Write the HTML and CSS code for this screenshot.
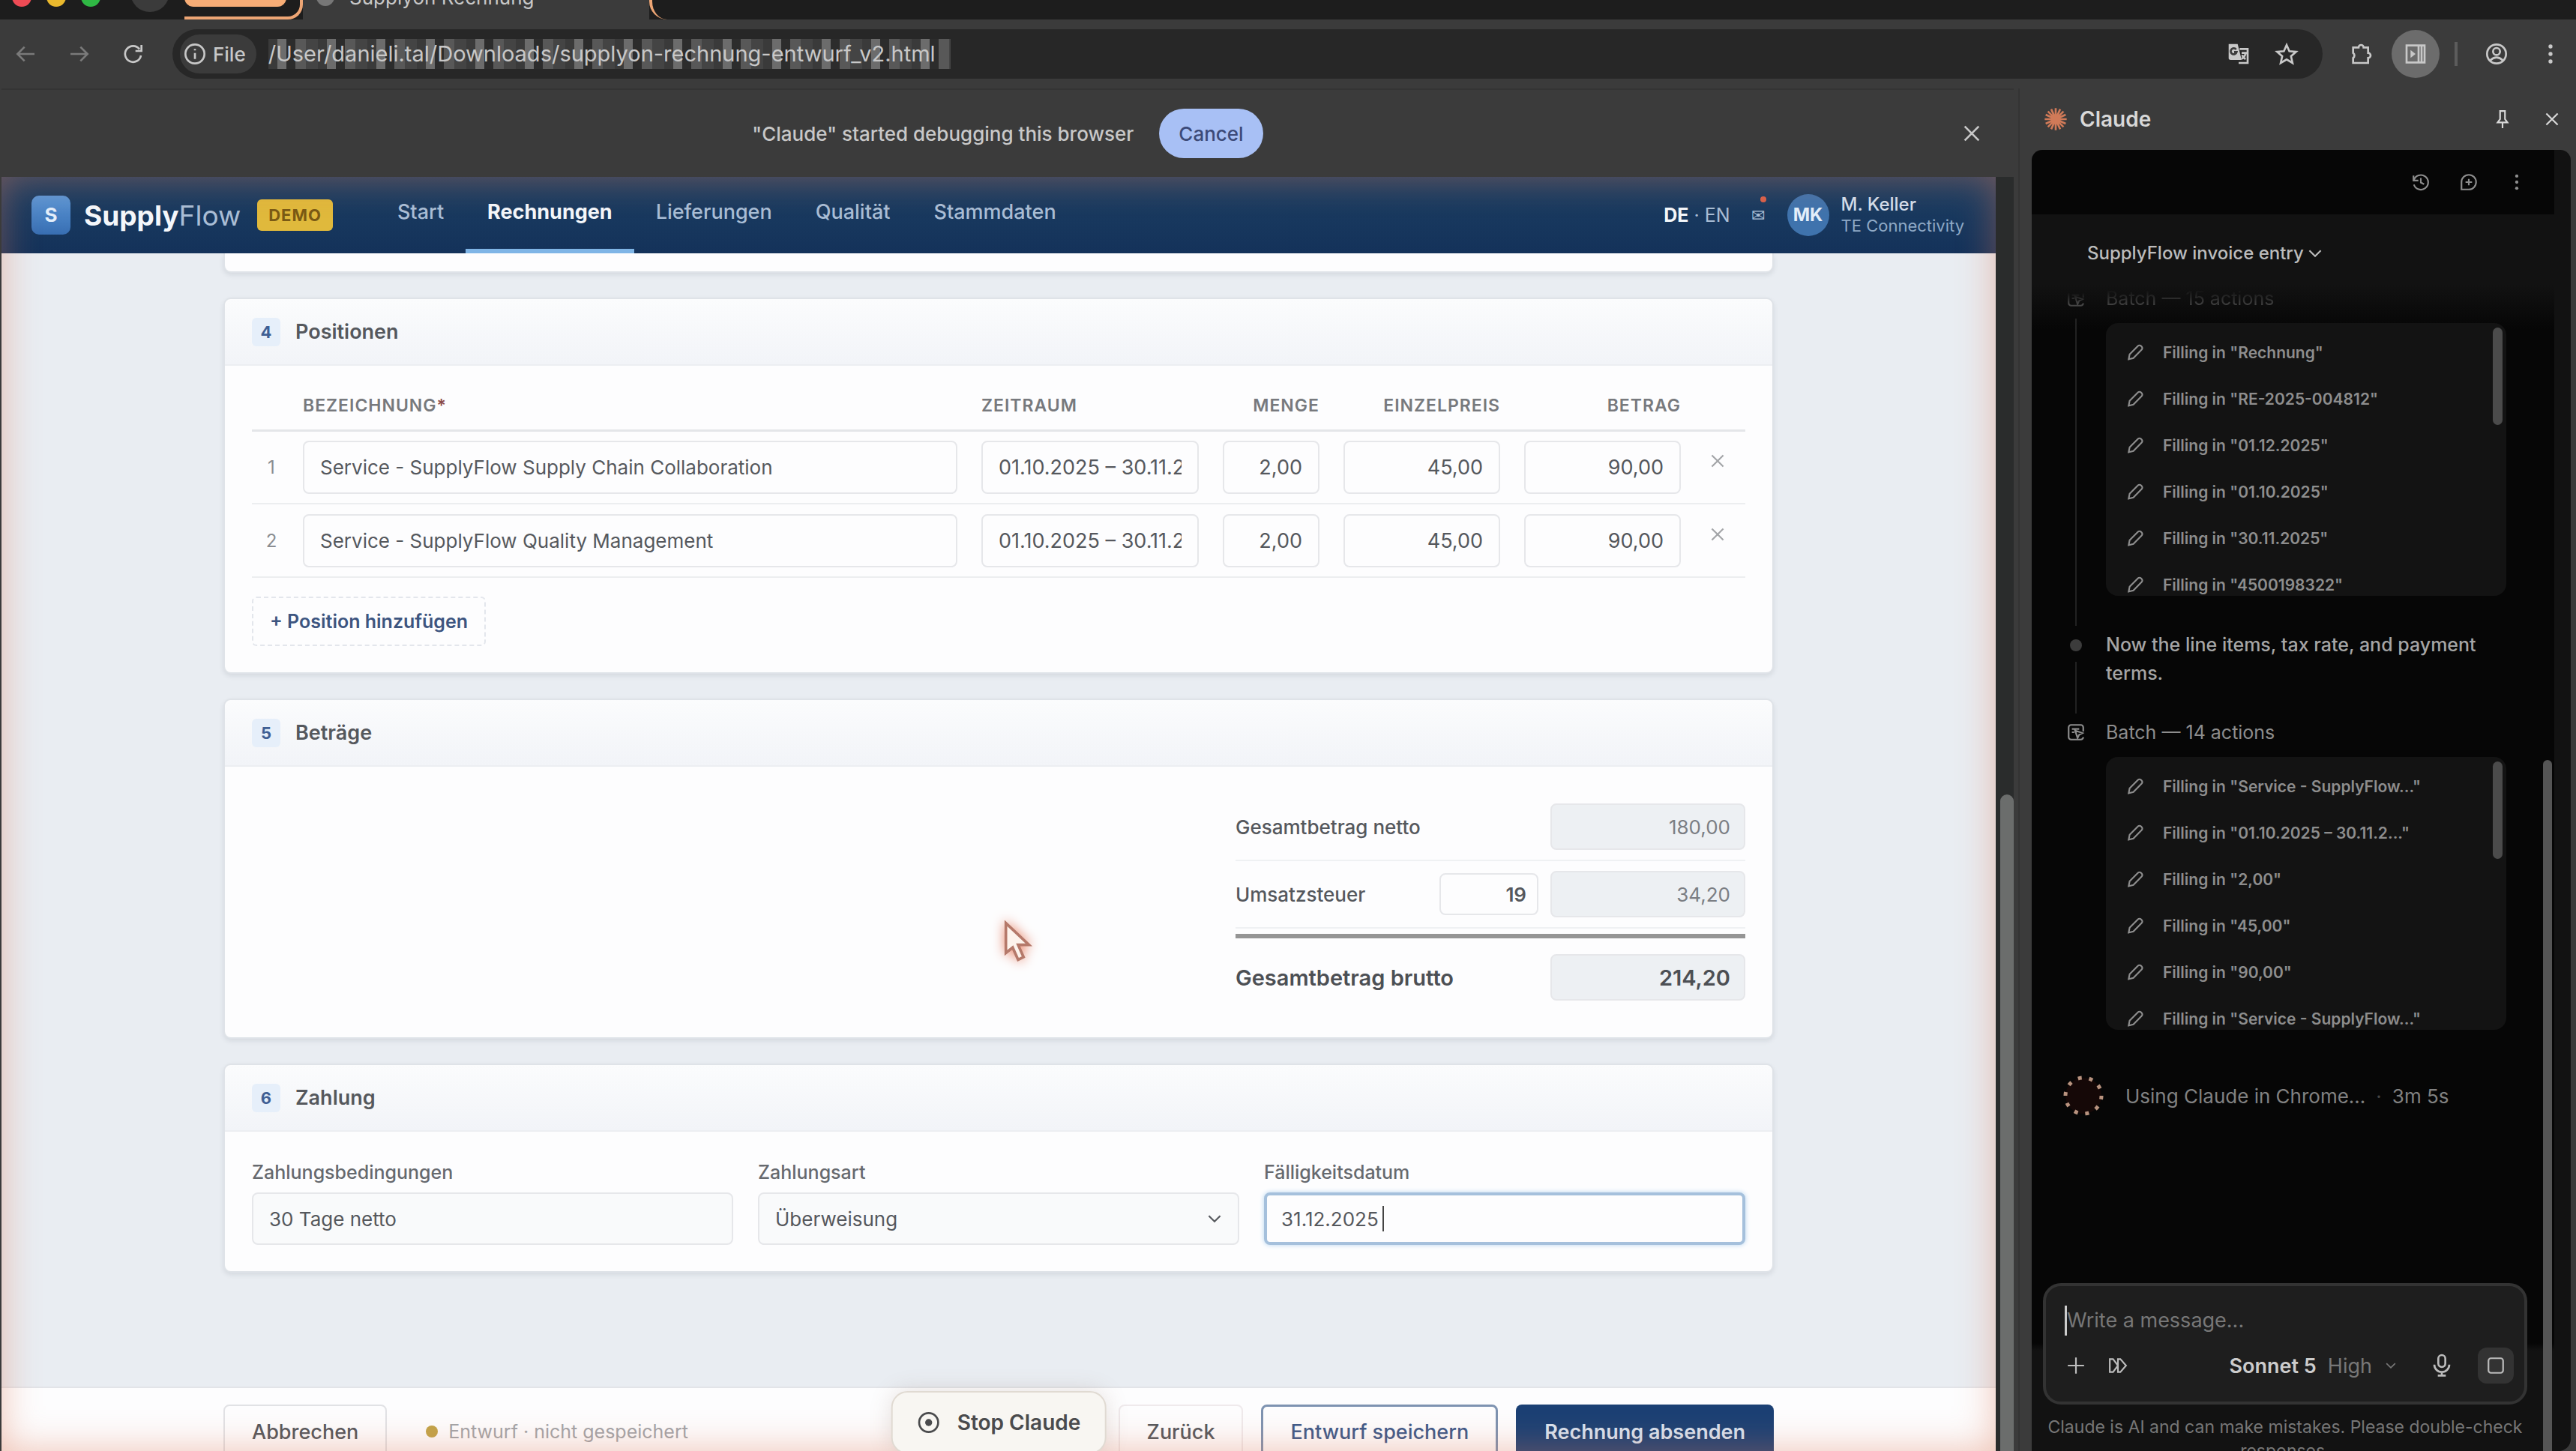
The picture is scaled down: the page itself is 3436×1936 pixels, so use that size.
FILE: index.html
```html
<!DOCTYPE html>
<html lang="de">
<head>
    <meta charset="UTF-8">
    <meta name="viewport" content="width=device-width, initial-scale=1.0">
    <title>SupplyFlow - Rechnungen</title>
    <link rel="stylesheet" href="styles.css">
</head>
<body>
    <svg class="sprite" aria-hidden="true">
        <symbol id="i-close" viewBox="0 0 24 24"><path d="M5 5l14 14M19 5L5 19"/></symbol>
        <symbol id="i-chevron" viewBox="0 0 24 24"><path d="M5 8.500l7 7 7-7"/></symbol>
        <symbol id="i-pencil" viewBox="0 0 24 24"><path d="M4 20.500l1.200-6L15.500 4.200a2.500 2.500 0 0 1 3.600 0l.9.9a2.500 2.500 0 0 1 0 3.600L9.800 19.200z"/></symbol>
        <symbol id="i-dots" viewBox="0 0 24 24"><circle cx="12" cy="4.500" r="2"/><circle cx="12" cy="12" r="2"/><circle cx="12" cy="19.500" r="2"/></symbol>
        <symbol id="i-batch" viewBox="0 0 24 24"><path d="M21 11V6a3 3 0 0 0-3-3H6a3 3 0 0 0-3 3v12a3 3 0 0 0 3 3h12a3 3 0 0 0 3-3M7 8h9M7 12h3M11 10l3 9 2-4 4-2z"/></symbol>
    </svg>

    <div class="browser">
        <div class="tabstrip">
            <span class="light red"></span>
            <span class="light yellow"></span>
            <span class="light green"></span>
            <span class="tab-search"></span>
            <div class="tab-group"><span class="group-chip"></span></div>
            <div class="tab"><span class="favicon"></span>Supplyon Rechnung</div>
            <div class="tab-rest"></div>
        </div>

        <div class="toolbar">
            <button class="tool dim" aria-label="Back"><svg class="icon" viewBox="0 0 24 24"><path d="M21 12H4M11 5l-7 7 7 7"/></svg></button>
            <button class="tool dim" aria-label="Forward"><svg class="icon" viewBox="0 0 24 24"><path d="M3 12h17M13 5l7 7-7 7"/></svg></button>
            <button class="tool" aria-label="Reload"><svg class="icon" viewBox="0 0 24 24"><path d="M19.500 13.500A8 8 0 1 1 18 7.200M20 3v6h-6"/></svg></button>
            <div class="omnibox">
                <span class="chip"><svg class="icon" viewBox="0 0 24 24"><circle cx="12" cy="12" r="9.500"/><path d="M12 11v6M12 7v1.500"/></svg>File</span>
                <span class="url">/User/danieli.tal/Downloads/supplyon-rechnung-entwurf_v2.html</span>
                <button class="tool push" aria-label="Translate"><svg class="icon" viewBox="0 0 24 24"><path class="fill" d="M2 2h9l4 16H4a2 2 0 0 1-2-2z"/><path d="M13 7h8v14h-9M15 11h5M17.500 10v2M19 12q-1 3-4 5M15.500 13q1 3 3.500 4"/><path class="cut" d="M9.500 7.500A3 3 0 1 0 10 10H7.500"/></svg></button>
                <button class="tool" aria-label="Bookmark"><svg class="icon" viewBox="0 0 24 24"><path d="M12 3l2.700 6.200 6.800.6-5.100 4.500 1.500 6.700L12 17.500 6.100 21l1.500-6.700-5.100-4.500 6.800-.6z"/></svg></button>
            </div>
            <button class="tool" aria-label="Extensions"><svg class="icon" viewBox="0 0 24 24"><path d="M3.500 5.500h5.500a2.500 2.500 0 0 1 5 0h4.500v5.500a2.500 2.500 0 0 1 0 5v5h-15v-5a3 3 0 0 0 0-5z"/></svg></button>
            <button class="tool active" aria-label="Side panel"><svg class="icon" viewBox="0 0 24 24"><path d="M3 3.500h18v17H3zM15 3.500v17M18 4v16"/><path class="fill" d="M7 8l5 4-5 4z"/></svg></button>
            <span class="separator"></span>
            <button class="tool" aria-label="Profile"><svg class="icon" viewBox="0 0 24 24"><circle cx="12" cy="12" r="9.500"/><circle cx="12" cy="9.500" r="3.500"/><path d="M5.500 18.500q6.500-6 13 0"/></svg></button>
            <button class="tool" aria-label="Menu"><svg class="icon solid"><use href="#i-dots"/></svg></button>
        </div>

        <div class="content">
            <div class="left">
                <div class="infobar">
                    <span>"Claude" started debugging this browser</span>
                    <button class="cancel">Cancel</button>
                    <button class="tool infobar-close" aria-label="Close"><svg class="icon"><use href="#i-close"/></svg></button>
                </div>

                <div class="page-wrap">
                    <div class="page">
                        <header class="nav">
                            <span class="logo">S</span>
                            <span class="brand"><b>Supply</b>Flow</span>
                            <span class="demo">DEMO</span>
                            <nav class="links">
                                <a href="#">Start</a>
                                <a href="#" class="current">Rechnungen</a>
                                <a href="#">Lieferungen</a>
                                <a href="#">Qualität</a>
                                <a href="#">Stammdaten</a>
                            </nav>
                            <span class="lang"><b>DE</b> · EN</span>
                            <span class="mail">✉<i class="badge"></i></span>
                            <span class="avatar">MK</span>
                            <span class="user">M. Keller<small>TE Connectivity</small></span>
                        </header>

                        <main class="form">
                            <section class="card stub"></section>

                            <section class="card">
                                <h2><span class="num">4</span>Positionen</h2>
                                <div class="card-body">
                                    <table class="items">
                                        <thead>
                                            <tr>
                                                <th class="c-nr"></th>
                                                <th>BEZEICHNUNG<span class="req">*</span></th>
                                                <th class="c-period">ZEITRAUM</th>
                                                <th class="c-qty right">MENGE</th>
                                                <th class="c-price right">EINZELPREIS</th>
                                                <th class="c-price right">BETRAG</th>
                                                <th class="c-del"></th>
                                            </tr>
                                        </thead>
                                        <tbody>
                                            <tr>
                                                <td class="nr">1</td>
                                                <td><input type="text" aria-label="Bezeichnung 1" value="Service - SupplyFlow Supply Chain Collaboration"></td>
                                                <td><input type="text" class="figure" aria-label="Zeitraum 1" value="01.10.2025 – 30.11.2025"></td>
                                                <td><input type="text" class="figure right" aria-label="Menge 1" value="2,00"></td>
                                                <td><input type="text" class="figure right" aria-label="Einzelpreis 1" value="45,00"></td>
                                                <td><input type="text" class="figure right" aria-label="Betrag 1" value="90,00"></td>
                                                <td class="del"><button aria-label="Position 1 entfernen"><svg class="icon small"><use href="#i-close"/></svg></button></td>
                                            </tr>
                                            <tr>
                                                <td class="nr">2</td>
                                                <td><input type="text" aria-label="Bezeichnung 2" value="Service - SupplyFlow Quality Management"></td>
                                                <td><input type="text" class="figure" aria-label="Zeitraum 2" value="01.10.2025 – 30.11.2025"></td>
                                                <td><input type="text" class="figure right" aria-label="Menge 2" value="2,00"></td>
                                                <td><input type="text" class="figure right" aria-label="Einzelpreis 2" value="45,00"></td>
                                                <td><input type="text" class="figure right" aria-label="Betrag 2" value="90,00"></td>
                                                <td class="del"><button aria-label="Position 2 entfernen"><svg class="icon small"><use href="#i-close"/></svg></button></td>
                                            </tr>
                                        </tbody>
                                    </table>
                                    <button class="add">+ Position hinzufügen</button>
                                </div>
                            </section>

                            <section class="card">
                                <h2><span class="num">5</span>Beträge</h2>
                                <div class="card-body">
                                    <div class="totals">
                                        <div class="total-row">
                                            <label for="netto">Gesamtbetrag netto</label>
                                            <input id="netto" type="text" class="right" value="180,00" readonly>
                                        </div>
                                        <div class="total-row">
                                            <label for="ust">Umsatzsteuer</label>
                                            <input type="text" class="right rate" aria-label="Steuersatz" value="19">
                                            <input id="ust" type="text" class="right" value="34,20" readonly>
                                        </div>
                                        <div class="total-row sum">
                                            <label for="brutto">Gesamtbetrag brutto</label>
                                            <input id="brutto" type="text" class="right" value="214,20" readonly>
                                        </div>
                                    </div>
                                </div>
                            </section>

                            <section class="card">
                                <h2><span class="num">6</span>Zahlung</h2>
                                <div class="card-body payment">
                                    <div class="field">
                                        <label for="terms">Zahlungsbedingungen</label>
                                        <input id="terms" type="text" class="soft" value="30 Tage netto">
                                    </div>
                                    <div class="field">
                                        <label for="method">Zahlungsart</label>
                                        <div class="select-wrap">
                                            <select id="method" class="soft"><option>Überweisung</option></select>
                                            <svg class="icon small"><use href="#i-chevron"/></svg>
                                        </div>
                                    </div>
                                    <div class="field">
                                        <label for="due">Fälligkeitsdatum</label>
                                        <div class="select-wrap">
                                            <input id="due" type="text" class="focused" value="31.12.2025">
                                            <i class="caret"></i>
                                        </div>
                                    </div>
                                </div>
                            </section>
                        </main>

                        <footer class="actions">
                            <button class="btn">Abbrechen</button>
                            <span class="status"><i></i>Entwurf · nicht gespeichert</span>
                            <button class="btn push faint">Zurück</button>
                            <button class="btn outline">Entwurf speichern</button>
                            <button class="btn primary">Rechnung absenden</button>
                        </footer>

                        <div class="glow"></div>
                        <button class="stop"><svg class="icon" viewBox="0 0 24 24"><circle cx="12" cy="12" r="9.500"/><circle class="fill" cx="12" cy="12" r="3.500"/></svg>Stop Claude</button>
                        <svg class="cursor" viewBox="0 0 24 32"><path d="M3 2v22l5-4 4 9 4-2-4-9h8z"/></svg>
                    </div>
                    <div class="scrollbar"><i></i></div>
                </div>
            </div>

            <aside class="side">
                <div class="side-head">
                    <svg class="burst" viewBox="0 0 24 24"><path d="M12 1v22M1 12h22M4.200 4.200l15.600 15.600M19.800 4.200L4.200 19.800M7.500 2l9 20M16.500 2l-9 20M2 7.500l20 9M2 16.500l20-9"/></svg>
                    <span>Claude</span>
                    <button class="tool push" aria-label="Pin"><svg class="icon small" viewBox="0 0 24 24"><path d="M8 2h8M9 2v10l-3 4h12l-3-4V2M12 16v7"/></svg></button>
                    <button class="tool" aria-label="Close panel"><svg class="icon small"><use href="#i-close"/></svg></button>
                </div>
                <div class="panel">
                    <div class="panel-tools">
                        <button class="tool" aria-label="History"><svg class="icon small" viewBox="0 0 24 24"><path d="M3 4v6h6M3.500 9.500A9 9 0 1 1 3.500 15M12 7v5.500l4 2"/></svg></button>
                        <button class="tool" aria-label="New chat"><svg class="icon small" viewBox="0 0 24 24"><path d="M3 21V12a9 9 0 1 1 9 9zM12 8v8M8 12h8"/></svg></button>
                        <button class="tool" aria-label="More"><svg class="icon small solid"><use href="#i-dots"/></svg></button>
                    </div>
                    <div class="panel-body">
                        <button class="chat-title">SupplyFlow invoice entry<svg class="icon small"><use href="#i-chevron"/></svg></button>

                        <div class="chat">
                            <div class="step">
                                <div class="rail"><svg class="icon small faded"><use href="#i-batch"/></svg><i class="line"></i></div>
                                <div>
                                    <div class="batch faded">Batch — 15 actions</div>
                                    <ul class="fills">
                                        <li><svg class="icon small"><use href="#i-pencil"/></svg>Filling in "Rechnung"</li>
                                        <li><svg class="icon small"><use href="#i-pencil"/></svg>Filling in "RE-2025-004812"</li>
                                        <li><svg class="icon small"><use href="#i-pencil"/></svg>Filling in "01.12.2025"</li>
                                        <li><svg class="icon small"><use href="#i-pencil"/></svg>Filling in "01.10.2025"</li>
                                        <li><svg class="icon small"><use href="#i-pencil"/></svg>Filling in "30.11.2025"</li>
                                        <li><svg class="icon small"><use href="#i-pencil"/></svg>Filling in "4500198322"</li>
                                    </ul>
                                </div>
                            </div>
                            <div class="step">
                                <div class="rail"><i class="dot"></i><i class="line"></i></div>
                                <p>Now the line items, tax rate, and payment terms.</p>
                            </div>
                            <div class="step">
                                <div class="rail"><svg class="icon small"><use href="#i-batch"/></svg></div>
                                <div>
                                    <div class="batch">Batch — 14 actions</div>
                                    <ul class="fills">
                                        <li><svg class="icon small"><use href="#i-pencil"/></svg>Filling in "Service - SupplyFlow..."</li>
                                        <li><svg class="icon small"><use href="#i-pencil"/></svg>Filling in "01.10.2025 – 30.11.2..."</li>
                                        <li><svg class="icon small"><use href="#i-pencil"/></svg>Filling in "2,00"</li>
                                        <li><svg class="icon small"><use href="#i-pencil"/></svg>Filling in "45,00"</li>
                                        <li><svg class="icon small"><use href="#i-pencil"/></svg>Filling in "90,00"</li>
                                        <li><svg class="icon small"><use href="#i-pencil"/></svg>Filling in "Service - SupplyFlow..."</li>
                                    </ul>
                                </div>
                            </div>
                            <div class="working">
                                <svg class="spinner" viewBox="0 0 56 56"><circle cx="28" cy="28" r="24"/></svg>
                                <span>Using Claude in Chrome...</span>
                                <span class="sep">·</span>
                                <span>3m 5s</span>
                            </div>
                        </div>

                        <div class="composer-area">
                            <div class="composer">
                                <i class="caret"></i>
                                <textarea rows="1" aria-label="Message" placeholder="Write a message..."></textarea>
                                <div class="composer-tools">
                                    <button class="tool" aria-label="Add"><svg class="icon small" viewBox="0 0 24 24"><path d="M12 2v20M2 12h20"/></svg></button>
                                    <button class="tool" aria-label="Skip permissions"><svg class="icon small" viewBox="0 0 24 24"><path d="M2 4h4l6 8-6 8H2zM12 4h3l7 8-7 8h-3z"/></svg></button>
                                    <button class="model push"><b>Sonnet 5</b> High <svg class="icon tiny"><use href="#i-chevron"/></svg></button>
                                    <button class="tool" aria-label="Dictate"><svg class="icon" viewBox="0 0 24 24"><rect x="8.500" y="1.500" width="7" height="12" rx="3.500"/><path d="M4.500 11a7.500 7.500 0 0 0 15 0M12 18.500V22M8 22h8"/></svg></button>
                                    <button class="halt" aria-label="Stop"><svg class="icon small" viewBox="0 0 24 24"><rect x="3" y="3" width="18" height="18" rx="3"/></svg></button>
                                </div>
                            </div>
                            <p class="disclaimer">Claude is AI and can make mistakes. Please double-check responses.</p>
                        </div>
                        <i class="panel-thumb"></i>
                    </div>
                </div>
            </aside>
        </div>
    </div>
</body>
</html>
```

FILE: styles.css
```css
* {
    box-sizing: border-box;
}
body {
    margin: 0;
    font-family: Inter, "Liberation Sans", sans-serif;
    font-size: 26px;
    color: #55585d;
    background: #3b3b3b;
}
button, input, select, textarea {
    font: inherit;
    color: inherit;
}
button {
    border: none;
    background: none;
    padding: 0;
    cursor: pointer;
}
.sprite {
    display: none;
}
.icon {
    width: 32px;
    height: 32px;
    flex: none;
    fill: none;
    stroke: currentColor;
    stroke-width: 2;
}
.icon.small {
    width: 26px;
    height: 26px;
}
.icon.tiny {
    width: 20px;
    height: 20px;
}
.icon.solid, .icon .fill {
    fill: currentColor;
    stroke: none;
}
.icon .cut {
    stroke: #3b3b3b;
}
.push {
    margin-left: auto;
}
.right {
    text-align: right;
}

/* browser chrome */
.browser {
    height: 100vh;
    display: flex;
    flex-direction: column;
    overflow: hidden;
    color: #c8c8c8;
}
.tabstrip {
    height: 26px;
    flex: none;
    display: flex;
    align-items: flex-end;
    overflow: hidden;
    padding-left: 16px;
    background: #1d1d1d;
}
.light {
    width: 26px;
    height: 26px;
    margin: 0 20px 17px 0;
    border-radius: 50%;
}
.red {
    background: #ee4b55;
}
.yellow {
    background: #eab92d;
}
.green {
    background: #2fb844;
}
.tab-search {
    width: 52px;
    height: 52px;
    margin: 0 20px 10px;
    border-radius: 50%;
    background: #3b3b3b;
}
.tab-group {
    width: 158px;
    height: 60px;
    border: solid #eda574;
    border-width: 0 4px 4px 0;
    border-radius: 0 0 20px 0;
}
.group-chip {
    display: block;
    width: 136px;
    height: 43px;
    border-radius: 12px;
    background: #f7ad76;
}
.tab {
    width: 462px;
    height: 60px;
    display: flex;
    align-items: center;
    gap: 20px;
    padding-left: 18px;
    background: #3b3b3b;
}
.favicon {
    width: 24px;
    height: 24px;
    border-radius: 50%;
    background: #777;
}
.tab-rest {
    flex: 1;
    height: 60px;
    border-left: 4px solid #eda574;
    border-radius: 0 0 0 24px;
}
.toolbar {
    height: 92px;
    flex: none;
    display: flex;
    align-items: center;
    gap: 8px;
    padding: 0 2px;
}
.tool {
    width: 64px;
    height: 64px;
    flex: none;
    display: flex;
    align-items: center;
    justify-content: center;
    border-radius: 50%;
}
.tool.dim {
    color: #7a7a7a;
}
.tool.active {
    background: #6c6c6c;
}
.separator {
    width: 4px;
    height: 32px;
    margin: 0 12px;
    background: #5c5c5c;
}
.omnibox {
    flex: 1;
    height: 66px;
    display: flex;
    align-items: center;
    margin: 0 12px;
    padding: 0 16px 0 10px;
    border-radius: 33px;
    background: #272727;
}
.chip {
    height: 52px;
    display: flex;
    align-items: center;
    gap: 8px;
    padding: 0 14px 0 4px;
    border-radius: 26px;
    background: #3b3b3b;
    font-weight: 500;
}
.url {
    height: 40px;
    margin-left: 16px;
    padding-right: 20px;
    line-height: 40px;
    font-size: 29px;
    background: repeating-linear-gradient(90deg, #3a3a3a 0 12px, #6c6c6c 12px 24px, #2c2c2c 24px 36px, #585858 36px 50px, #444 50px 66px);
}

.content {
    flex: 1;
    min-height: 0;
    display: grid;
    grid-template-columns: minmax(0, 1fr) 742px;
}
.left {
    display: flex;
    flex-direction: column;
    min-height: 0;
    padding: 0 6px 0 2px;
    border-right: 2px solid #343434;
}
.infobar {
    position: relative;
    height: 118px;
    flex: none;
    display: flex;
    align-items: center;
    justify-content: center;
    gap: 34px;
    font-weight: 500;
    border-top: 2px solid #343434;
}
.cancel {
    height: 66px;
    padding: 0 26px;
    border-radius: 33px;
    background: #a8c0f5;
    color: #3c4a78;
}
.infobar-close {
    position: absolute;
    right: 24px;
}

/* invoice page */
.page-wrap {
    flex: 1;
    min-height: 0;
    display: flex;
}
.page {
    position: relative;
    flex: 1;
    display: flex;
    flex-direction: column;
    background: #e9edf2;
    color: #55585d;
}
.scrollbar {
    width: 24px;
    padding-top: 824px;
    background: #2a2c2c;
}
.scrollbar i {
    display: block;
    height: 100%;
    margin-left: 6px;
    border-radius: 9px 9px 0 0;
    background: #6b6d6c;
}
.nav {
    height: 102px;
    flex: none;
    display: flex;
    align-items: center;
    padding: 0 42px 0 40px;
    background: linear-gradient(#1c3f63, #14325a);
    color: #a9bed6;
}
.logo {
    width: 52px;
    height: 52px;
    line-height: 52px;
    border-radius: 10px;
    background: linear-gradient(#5a97d8, #386eb2);
    color: #e4effb;
    font-weight: 700;
    text-align: center;
}
.brand {
    margin-left: 18px;
    font-size: 37px;
}
.brand b {
    color: #f4f7fb;
}
.demo {
    margin-left: 22px;
    padding: 0 15px;
    line-height: 42px;
    border-radius: 6px;
    background: #e0b93c;
    color: #7a5a14;
    font-size: 22px;
    font-weight: 700;
    letter-spacing: 1px;
}
.links {
    align-self: stretch;
    display: flex;
    margin-left: 57px;
}
.links a {
    padding: 0 29px;
    line-height: 94px;
    color: inherit;
    text-decoration: none;
    font-size: 27px;
    font-weight: 500;
}
.links .current {
    color: #f4f7fb;
    font-weight: 700;
    border-bottom: 6px solid #7fb5e6;
}
.lang {
    margin-left: auto;
    font-size: 25px;
}
.lang b {
    color: #f4f7fb;
}
.mail {
    position: relative;
    margin-left: 28px;
    font-size: 22px;
}
.badge {
    position: absolute;
    top: -12px;
    right: -2px;
    width: 8px;
    height: 8px;
    border-radius: 50%;
    background: #d9604a;
}
.avatar {
    width: 56px;
    height: 56px;
    margin: 0 16px 0 30px;
    line-height: 56px;
    border-radius: 50%;
    background: #3f73ad;
    color: #e4effb;
    font-size: 24px;
    font-weight: 700;
    text-align: center;
}
.user {
    line-height: 28px;
    font-size: 24px;
    font-weight: 500;
    color: #d3dfec;
}
.user small {
    display: block;
    font-size: 22px;
    font-weight: 400;
    color: #8ea9c6;
}
.form {
    flex: 1;
    min-height: 0;
    overflow: hidden;
    display: flex;
    flex-direction: column;
    gap: 33px;
    padding: 0 296px;
}
.card {
    flex: none;
    border: 2px solid #dfe3e8;
    border-radius: 10px;
    background: #fdfdfe;
    box-shadow: 0 3px 6px rgba(40, 50, 70, 0.1);
}
.stub {
    height: 26px;
    border-top: none;
    border-radius: 0 0 10px 10px;
}
.card h2 {
    height: 89px;
    margin: 0;
    padding: 0 36px;
    display: flex;
    align-items: center;
    gap: 20px;
    border-bottom: 2px solid #eceef2;
    border-radius: 10px 10px 0 0;
    background: linear-gradient(#fbfcfd, #f2f4f8);
    font-size: 27px;
    font-weight: 600;
}
.num {
    width: 38px;
    line-height: 38px;
    border-radius: 6px;
    background: #e6effa;
    color: #3f5f94;
    font-size: 22px;
    font-weight: 700;
    text-align: center;
}
.card-body {
    padding: 35px 36px;
}
.card input, .card select {
    width: 100%;
    height: 71px;
    padding: 0 21px;
    border: 2px solid #e6e7ea;
    border-radius: 8px;
    background: #fdfdfe;
    outline: none;
}
.card .figure {
    font-size: 27px;
}
.items {
    width: 100%;
    table-layout: fixed;
    border-collapse: collapse;
}
.items th {
    height: 51px;
    padding: 4px 16px 0;
    vertical-align: top;
    text-align: left;
    font-size: 23px;
    font-weight: 600;
    letter-spacing: 1px;
    color: #77797d;
    border-bottom: 3px solid #e4e6e9;
}
.items th.right {
    text-align: right;
}
.items td {
    height: 98px;
    padding: 0 16px;
    border-bottom: 2px solid #eceef0;
}
.req {
    color: #8a4a4a;
}
.c-nr {
    width: 52px;
}
.c-period {
    width: 322px;
}
.c-qty {
    width: 161px;
}
.c-price {
    width: 241px;
}
.c-del {
    width: 70px;
}
.items .nr {
    color: #8b8d91;
    font-size: 24px;
    text-align: center;
}
.items .del {
    padding: 0 0 10px 20px;
    color: #a3a5a8;
}
.add {
    height: 66px;
    margin-top: 25px;
    padding: 0 22px;
    border: 2px dashed #e3e6ec;
    border-radius: 6px;
    color: #3d5580;
    font-size: 25px;
    font-weight: 600;
}
.totals {
    width: 680px;
    margin-left: auto;
}
.total-row {
    display: flex;
    align-items: center;
    gap: 16px;
    padding: 13px 0;
    border-bottom: 2px solid #eff1f3;
}
.total-row:first-child {
    padding-top: 14px;
}
.total-row label {
    flex: 1;
    font-weight: 500;
}
.total-row input {
    width: 260px;
    height: 62px;
    padding: 0 18px;
}
.total-row input[readonly] {
    background: #edf0f3;
    color: #7b7e83;
}
.total-row .rate {
    width: 132px;
    height: 56px;
    padding: 0 14px;
    font-weight: 600;
}
.total-row.sum {
    margin-top: 7px;
    padding: 21px 0 14px;
    border-top: 6px solid #959595;
    border-bottom: none;
}
.total-row.sum label, .total-row.sum input {
    font-size: 29px;
    font-weight: 600;
    color: #4c4f54;
}
.payment {
    display: grid;
    grid-template-columns: repeat(3, 1fr);
    gap: 33px;
}
.field label {
    display: block;
    margin-bottom: 8px;
    line-height: 38px;
    font-size: 25px;
    font-weight: 500;
    color: #66696e;
}
.field input, .field select {
    display: block;
    height: 70px;
}
.card .soft {
    appearance: none;
    background: #f9fafb;
}
.select-wrap {
    position: relative;
}
.select-wrap .icon {
    position: absolute;
    right: 20px;
    top: 22px;
}
.card .focused {
    padding: 0 19px;
    border: 4px solid #a5c0dc;
    box-shadow: 0 0 6px #b5d4f0;
}
.caret {
    position: absolute;
    left: 158px;
    top: 18px;
    width: 2px;
    height: 34px;
    background: #444;
}
.actions {
    height: 86px;
    flex: none;
    display: flex;
    gap: 24px;
    overflow: hidden;
    padding: 22px 296px 0;
    background: #fdfdfe;
    border-top: 2px solid #e2e4e8;
}
.btn {
    height: 72px;
    flex: none;
    padding: 0 36px;
    border: 2px solid #e1e2e5;
    border-radius: 8px;
    font-size: 27px;
    font-weight: 500;
}
.faint {
    border-color: #efeaec;
}
.btn.outline {
    border: 3px solid #7e93b1;
    color: #3d5a8a;
}
.btn.primary {
    padding: 0 38px;
    border: none;
    background: #1b4074;
    color: #d7e2f0;
    font-weight: 600;
}
.status {
    height: 72px;
    display: flex;
    align-items: center;
    gap: 14px;
    margin-left: 28px;
    font-size: 25px;
    color: #a3a5a9;
}
.status i {
    width: 16px;
    height: 16px;
    border-radius: 50%;
    background: #c2a449;
}
.glow {
    position: absolute;
    inset: 0;
    box-shadow: inset 0 0 50px rgba(222, 120, 85, 0.45);
    pointer-events: none;
}
.stop {
    position: absolute;
    left: 50%;
    bottom: -4px;
    height: 84px;
    transform: translateX(-50%);
    display: flex;
    align-items: center;
    gap: 22px;
    padding: 0 32px;
    border: 2px solid #e0dad2;
    border-radius: 22px;
    background: #f8f6f2;
    box-shadow: 0 0 30px rgba(120, 90, 70, 0.18);
    color: #4a4b4d;
    font-size: 28px;
    font-weight: 600;
}
.cursor {
    position: absolute;
    left: 1334px;
    top: 992px;
    width: 44px;
    height: 58px;
    fill: #fdf3ec;
    stroke: #b5796a;
    stroke-width: 2;
    filter: drop-shadow(0 0 8px #e8866a);
}

/* Claude side panel */
.side {
    display: flex;
    flex-direction: column;
    min-height: 0;
    padding: 0 7px 0 16px;
}
.side-head {
    height: 82px;
    flex: none;
    display: flex;
    align-items: center;
    gap: 16px;
    padding-left: 16px;
    font-size: 28px;
    font-weight: 600;
    color: #d8d8d8;
}
.side-head .tool {
    width: 50px;
}
.burst {
    width: 32px;
    height: 32px;
    stroke: #d07a58;
    stroke-width: 2;
}
.panel {
    flex: 1;
    min-height: 0;
    display: flex;
    flex-direction: column;
    border-radius: 14px 14px 16px 0;
    background: #060606;
    border-right: 22px solid #121212;
    overflow: hidden;
    color: #8d8d8d;
}
.panel-tools {
    height: 86px;
    flex: none;
    display: flex;
    align-items: center;
    justify-content: flex-end;
    padding-right: 18px;
}
.panel-body {
    position: relative;
    flex: 1;
    min-height: 0;
    display: flex;
    flex-direction: column;
}
.chat-title {
    height: 93px;
    flex: none;
    display: flex;
    align-items: center;
    gap: 2px;
    padding: 10px 0 0 74px;
    background: #121212;
    color: #bcbcbc;
    font-size: 24px;
    font-weight: 500;
}
.chat {
    flex: 1;
    min-height: 0;
    overflow: hidden;
    padding: 0 64px 0 47px;
    background: linear-gradient(#121212, #060606 60px);
    font-size: 25px;
}
.step {
    display: grid;
    grid-template-columns: 24px minmax(0, 1fr);
    gap: 28px;
}
.rail {
    display: flex;
    flex-direction: column;
    align-items: center;
    gap: 14px;
    padding: 6px 0;
}
.line {
    flex: 1;
    width: 2px;
    background: #222;
}
.dot {
    width: 16px;
    height: 16px;
    margin-top: 6px;
    border-radius: 50%;
    background: #3c3c3c;
}
.batch {
    line-height: 38px;
}
.faded {
    opacity: 0.45;
    -webkit-mask-image: linear-gradient(transparent 20%, #000 80%);
    mask-image: linear-gradient(transparent 20%, #000 80%);
}
.fills {
    position: relative;
    height: 364px;
    margin: 14px 0 46px;
    padding: 8px 26px;
    overflow: hidden;
    list-style: none;
    border-radius: 16px;
    background: #131313;
    font-size: 21px;
    font-weight: 600;
}
.fills::after {
    content: "";
    position: absolute;
    top: 6px;
    right: 5px;
    width: 13px;
    height: 130px;
    border-radius: 7px;
    background: #4b4b4b;
}
.fills li {
    height: 62px;
    display: flex;
    align-items: center;
    gap: 24px;
}
.step p {
    margin: 0 0 41px;
    line-height: 38px;
    font-weight: 500;
    color: #a5a5a5;
}
.working {
    display: flex;
    align-items: center;
    gap: 14px;
    margin-top: 14px;
    color: #818181;
    font-size: 26px;
}
.working .sep {
    color: #444;
}
.spinner {
    width: 56px;
    height: 56px;
    margin-left: -6px;
    margin-right: 14px;
    fill: #150807;
    stroke: #b8937f;
    stroke-width: 5;
    stroke-dasharray: 5 10;
}
.composer-area {
    height: 224px;
    flex: none;
    overflow: hidden;
    padding: 0 36px 0 15px;
    background: linear-gradient(#060606 80px, #121212 90px);
}
.composer {
    position: relative;
    height: 162px;
    padding: 26px 14px 0 28px;
    border: 4px solid #333;
    border-radius: 24px;
    background: #1e1e1e;
}
.composer textarea {
    display: block;
    width: 100%;
    height: 40px;
    padding: 0;
    border: none;
    outline: none;
    resize: none;
    overflow: hidden;
    background: none;
    line-height: 40px;
    font-size: 27px;
}
.composer textarea::placeholder {
    color: #777;
}
.composer .caret {
    left: 25px;
    top: 26px;
    width: 3px;
    height: 40px;
    background: #ccc;
}
.composer-tools {
    display: flex;
    align-items: center;
    gap: 20px;
    margin-top: 16px;
    color: #bcbcbc;
}
.composer-tools .tool {
    width: 36px;
    height: 48px;
}
.composer-tools .tool:first-child {
    margin-left: -6px;
}
.model {
    display: flex;
    align-items: center;
    gap: 15px;
    margin-right: 20px;
    font-size: 27px;
    color: #777;
}
.model b {
    font-weight: 600;
    color: #ccc;
}
.halt {
    width: 48px;
    height: 48px;
    margin-left: 10px;
    display: flex;
    align-items: center;
    justify-content: center;
    border-radius: 12px;
    background: #333;
}
.disclaimer {
    margin: 14px 0 0;
    line-height: 32px;
    font-size: 23px;
    text-align: center;
    color: #777;
}
.panel-thumb {
    position: absolute;
    right: 3px;
    top: 728px;
    bottom: 0;
    width: 12px;
    border-radius: 6px 6px 0 0;
    background: #555;
}
```
